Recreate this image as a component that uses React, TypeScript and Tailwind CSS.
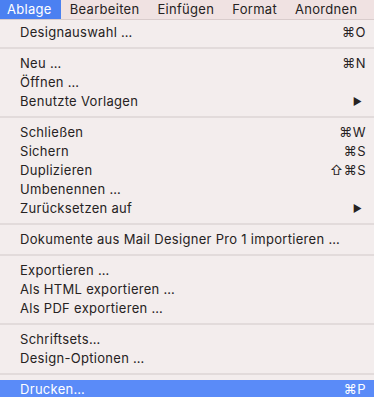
import React from "react";

type Item = { label: string; shortcut?: string; submenu?: boolean; active?: boolean };

const groups: Item[][] = [
    [{ label: "Designauswahl …", shortcut: "⌘O" }],
    [
        { label: "Neu …", shortcut: "⌘N" },
        { label: "Öffnen …" },
        { label: "Benutzte Vorlagen", submenu: true },
    ],
    [
        { label: "Schließen", shortcut: "⌘W" },
        { label: "Sichern", shortcut: "⌘S" },
        { label: "Duplizieren", shortcut: "⇧⌘S" },
        { label: "Umbenennen …" },
        { label: "Zurücksetzen auf", submenu: true },
    ],
    [{ label: "Dokumente aus Mail Designer Pro 1 importieren …" }],
    [
        { label: "Exportieren …" },
        { label: "Als HTML exportieren …" },
        { label: "Als PDF exportieren …" },
    ],
    [{ label: "Schriftsets…" }, { label: "Design-Optionen …" }],
    [{ label: "Drucken…", shortcut: "⌘P", active: true }],
];

const menus = ["Ablage", "Bearbeiten", "Einfügen", "Format", "Anordnen"];

function Row({ item }: { item: Item }) {
    return (
        <div
            className={
                "flex h-[19px] items-center justify-between pl-5 pr-2 " +
                (item.active ? "bg-[#5a8bf8] text-white" : "text-[#262222]")
            }
        >
            <span className="tracking-[0.3px]">{item.label}</span>
            {item.shortcut && <span className="tracking-[0.5px]">{item.shortcut}</span>}
            {item.submenu && <span className="mr-1 text-[10px]">▶</span>}
        </div>
    );
}

export default function App() {
    return (
        <div
            className="h-[397px] w-[374px] overflow-hidden bg-[#f3eded] text-[13px]"
            style={{ fontFamily: "Inter, 'Liberation Sans', sans-serif" }}
        >
            <div className="flex h-5 border-b border-[#d9cccc] bg-[#f0e2e2] text-[13px] tracking-[0.3px] text-[#262222]">
                {menus.map((m, i) => (
                    <div
                        key={m}
                        className={
                            "flex h-[19px] items-center " +
                            (i === 0 ? "bg-[#4b80f1] pl-[7px] pr-[9px] text-white" : "px-[9px]")
                        }
                    >
                        {m}
                    </div>
                ))}
            </div>
            <div className="pt-[3px]">
                {groups.map((g, gi) => (
                    <div key={gi}>
                        {gi > 0 && (
                            <div className="flex h-3 items-center">
                                <div className="h-[2px] w-full bg-[#e2dbdb]" />
                            </div>
                        )}
                        {g.map((it) => (
                            <Row key={it.label} item={it} />
                        ))}
                    </div>
                ))}
            </div>
        </div>
    );
}
